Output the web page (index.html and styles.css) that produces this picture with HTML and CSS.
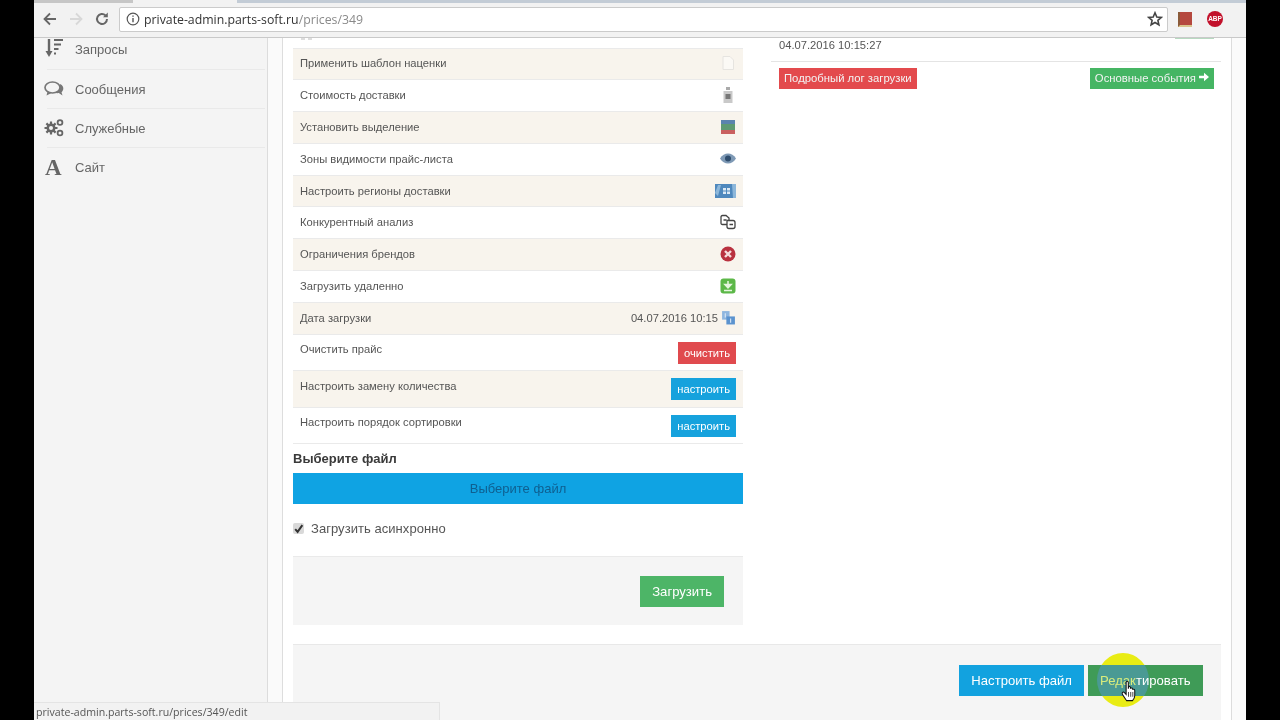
FILE: index.html
```html
<!DOCTYPE html>
<html lang="ru">
<head>
<meta charset="utf-8">
<title>Прайс-лист</title>
<link rel="stylesheet" href="styles.css">
</head>
<body>
<div class="window">
  <div class="tabstrip"><span class="tab tab-a"></span><span class="tab tab-active"></span><span class="tab tab-b"></span></div>
  <header class="toolbar">
    <svg class="nav" viewBox="0 0 16 16"><path d="M14 8H3M8 2.500 2.500 8 8 13.500" fill="none" stroke="#666" stroke-width="1.800"/></svg>
    <svg class="nav" viewBox="0 0 16 16"><path d="M2 8h11M8 2.500 13.500 8 8 13.500" fill="none" stroke="#d8d8d8" stroke-width="1.800"/></svg>
    <svg class="nav" viewBox="0 0 16 16"><path d="M13 8a5 5 0 1 1-1.500-3.600" fill="none" stroke="#666" stroke-width="2"/><path d="M13.800 1.500v4.800H9z" fill="#666"/></svg>
    <div class="omnibox">
      <svg class="info" viewBox="0 0 14 14"><circle cx="7" cy="7" r="5.800" fill="none" stroke="#555" stroke-width="1.200"/><path d="M7 6v4.200M7 3.500v1.300" stroke="#555" stroke-width="1.400"/></svg>
      <span class="url">private-admin.parts-soft.ru<span class="url-path">/prices/349</span></span>
      <svg class="star" viewBox="0 0 16 16"><path d="M8 1.800 9.800 6l4.500.4-3.400 3 1 4.400L8 11.500l-3.900 2.300 1-4.400-3.400-3L6.200 6z" fill="none" stroke="#444" stroke-width="1.600"/></svg>
    </div>
    <span class="ext-book"></span>
    <span class="ext-abp">ABP</span>
  </header>

  <div class="page">
    <aside class="sidebar">
      <div class="side-item side-first">
        <svg class="side-icon" viewBox="0 0 20 20"><path d="M5 0v14" stroke="#666" stroke-width="2.400"/><path d="M1.500 12 5 18l3.500-6z" fill="#666"/><path d="M10 1h9M10 5.500h7M10 10h4.500M10 14.500h2" stroke="#666" stroke-width="2.200"/></svg>
        <span>Запросы</span>
      </div>
      <div class="side-item">
        <svg class="side-icon" viewBox="0 0 20 20"><ellipse cx="8.500" cy="8.500" rx="7.500" ry="5.500" fill="none" stroke="#777" stroke-width="1.700"/><path d="M3.500 12.500 2.500 16.500 7.500 14" fill="#777"/><path d="M16 5c2.800 1.200 3.800 3.500 3.200 5.500-.3 1.200-1 2.200-1.700 2.800l1 3.200-3.700-2.400c-1.500.3-3.300 0-4.300-.8 3.500 0 6-2.500 5.500-8.300z" fill="#777"/></svg>
        <span>Сообщения</span>
      </div>
      <div class="side-item">
        <svg class="side-icon" viewBox="0 0 20 20"><path d="M7 3.500v13M.5 10h13M2.400 5.400l9.200 9.200M11.600 5.400l-9.200 9.200" stroke="#666" stroke-width="2.200"/><circle cx="7" cy="10" r="4.500" fill="#666"/><circle cx="7" cy="10" r="2" fill="#f4f4f4"/><circle cx="16" cy="4.500" r="2.400" fill="none" stroke="#666" stroke-width="1.800"/><circle cx="16" cy="15" r="2.400" fill="none" stroke="#666" stroke-width="1.800"/></svg>
        <span>Служебные</span>
      </div>
      <div class="side-item side-last">
        <span class="side-letter">A</span>
        <span>Сайт</span>
      </div>
    </aside>
    <div class="gutter"></div>

    <main class="panel">
      <div class="columns">
        <section class="col-left">
          <div class="row row-clip"><svg class="ic ic-clip" viewBox="0 0 14 2"><path d="M1 0h4v2H1zM8 0h4v2H8z" fill="#ddd"/></svg></div>
          <div class="row row-alt"><span>Применить шаблон наценки</span>
            <svg class="ic" viewBox="0 0 14 14"><path d="M2 .5h7l3.500 3.500v9.500H2z" fill="#fbf9f5" stroke="#e6e4e0"/></svg></div>
          <div class="row"><span>Стоимость доставки</span>
            <svg class="ic ic-bottle" viewBox="0 0 12 16"><path d="M4 0h4v3H4z" fill="#aaa"/><path d="M1.500 4h9v12h-9z" fill="#c9c9c9"/><path d="M3.500 7h5v5h-5z" fill="#777"/></svg></div>
          <div class="row row-alt"><span>Установить выделение</span>
            <svg class="ic" viewBox="0 0 14 14"><path d="M0 0h14v4H0z" fill="#5b84ae"/><path d="M0 4h14v6H0z" fill="#5f9a73"/><path d="M0 10h14v4H0z" fill="#c96060"/></svg></div>
          <div class="row"><span>Зоны видимости прайс-листа</span>
            <svg class="ic ic-eye" viewBox="0 0 16 11"><path d="M0 5.500c2-3.500 5-5 8-5s6 1.500 8 5c-2 3.500-5 5-8 5s-6-1.500-8-5z" fill="#7e99b5"/><circle cx="8" cy="5.500" r="3" fill="#2f4d6d"/></svg></div>
          <div class="row row-alt"><span>Настроить регионы доставки</span>
            <svg class="ic ic-wide" viewBox="0 0 21 14"><path d="M0 0h21v14H0z" fill="#4f88bd"/><path d="M0 9 3 1h3L3 12zM17 0h4v14h-3z" fill="#8db7da"/><path d="M8 4h7v6H8z" fill="#dce9f4"/><path d="M11.500 4v6M8 7h7" stroke="#4f88bd"/></svg></div>
          <div class="row"><span>Конкурентный анализ</span>
            <svg class="ic ic-big" viewBox="0 0 16 16"><path d="M1 3q0-1.500 1.500-1.500H6L9 4v6.500H2.500Q1 10.500 1 9z" fill="#fff" stroke="#444" stroke-width="1.300"/><path d="M7 6.500h6q2 0 2 2v4q0 2-2 2H9q-2 0-2-2z" fill="#fff" stroke="#444" stroke-width="1.300"/><path d="M3.500 6h3M9.500 10.500h3.500" stroke="#444" stroke-width="1.300"/></svg></div>
          <div class="row row-alt"><span>Ограничения брендов</span>
            <svg class="ic ic-big" viewBox="0 0 16 16"><circle cx="8" cy="8" r="7.500" fill="#b9313f"/><path d="M5 5l6 6M11 5l-6 6" stroke="#f5dcdc" stroke-width="2.400"/></svg></div>
          <div class="row"><span>Загрузить удаленно</span>
            <svg class="ic ic-big" viewBox="0 0 16 16"><rect x=".5" y=".5" width="15" height="15" rx="3" fill="#5cb848"/><path d="M8 3v4M4.800 6.500h6.400L8 10zM4 12.500h8" stroke="#e6f6df" fill="#e6f6df" stroke-width="1.500"/></svg></div>
          <div class="row row-alt"><span>Дата загрузки</span>
            <span class="row-date">04.07.2016 10:15<svg class="ic-date" viewBox="0 0 14 14"><path d="M1 1h7v8H1z" fill="#8fb6df"/><path d="M5 6h8v7.500H5z" fill="#5b93cf"/><path d="M4 3v4M9 8v4" stroke="#dce9f6"/></svg></span></div>
          <div class="row row-btn"><span>Очистить прайс</span><a class="mini mini-red">очистить</a></div>
          <div class="row row-btn row-alt"><span>Настроить замену количества</span><a class="mini mini-blue">настроить</a></div>
          <div class="row row-btn"><span>Настроить порядок сортировки</span><a class="mini mini-blue">настроить</a></div>

          <h4 class="file-title">Выберите файл</h4>
          <div class="file-bar">Выберите файл</div>
          <label class="async"><span class="check"><svg viewBox="0 0 10 10"><path d="M2 5.500 4.200 8 8.500 2" fill="none" stroke="#333" stroke-width="1.800"/></svg></span>Загрузить асинхронно</label>
          <div class="form-foot"><a class="btn btn-green">Загрузить</a></div>
        </section>

        <section class="col-right">
          <div class="tiny-green"></div>
          <div class="log-date">04.07.2016 10:15:27</div>
          <div class="log-actions">
            <a class="log-btn log-red">Подробный лог загрузки</a>
            <a class="log-btn log-green">Основные события <svg class="log-arrow" viewBox="0 0 10 10"><path d="M0 3.700h5V.8L10 5 5 9.200V6.300H0z" fill="#fff"/></svg></a>
          </div>
        </section>
      </div>

      <footer class="panel-foot">
        <a class="btn btn-blue">Настроить файл</a>
        <div class="edit-wrap">
          <span class="spot"></span>
          <a class="btn btn-edit"><span class="spot-in"></span><span class="edit-label"><span class="edit-hl">Редак</span>тировать</span></a>
          <svg class="hand" viewBox="0 0 16 24"><path d="M5 2.500c0-1.600 2.300-1.600 2.300 0V9l.4-2c1.800-.5 2 .3 2 1.500 1.700-.7 2.200.2 2.200 1.200 1.500-.5 2.100.4 2.100 1.500v5.300c0 2-1.300 4-2.300 5H5.500c-1-1.500-4-5.500-4.500-7-.5-1.800 1.300-2.500 2.300-1.300L5 15z" fill="#fff" stroke="#111" stroke-width="1.100"/><path d="M7.500 12.500v5M9.800 12.500v5M12 12.500v5" stroke="#111" stroke-width=".8"/></svg>
        </div>
      </footer>
    </main>
    <div class="gutter gutter-right"></div>
  </div>
  <div class="status">private-admin.parts-soft.ru/prices/349/edit</div>
</div>
</body>
</html>
```
FILE: styles.css
```css
* { box-sizing: border-box; }
html, body { margin: 0; height: 720px; overflow: hidden; background: #000; }
body { display: flex; justify-content: flex-start; padding-left: 34px; font-family: "Liberation Sans", Arial, sans-serif; color: #555; }
a { display: inline-block; }

.window { position: relative; width: 1212px; height: 720px; display: flex; flex-direction: column; background: #fff; overflow: hidden; filter: blur(.5px); }

.tabstrip { height: 3px; display: flex; background: #c9d6e4; flex: none; }
.tab { display: block; height: 3px; }
.tab-a { width: 99px; background: #c6c6c6; }
.tab-active { width: 104px; background: #f2f2f2; }
.tab-b { width: 1009px; background: #c3ccd6; }

.toolbar { height: 35px; flex: none; display: flex; align-items: center; padding: 0 0 2px 8px; background: #f2f2f2; border-bottom: 1px solid #c9c9c9; }
.nav { width: 16px; height: 16px; margin-right: 10px; flex: none; }
.omnibox { margin-left: -1px; width: 1049px; height: 25px; display: flex; align-items: center; padding: 0 4px 0 6px; background: #fff; border: 1px solid #cbcbcb; border-radius: 2px; }
.info { width: 14px; height: 14px; margin-right: 4px; flex: none; }
.url { flex: 1; font: 12.300px "Open Sans", sans-serif; color: #333; }
.url-path { color: #8a8a8a; }
.star { width: 16px; height: 16px; flex: none; }
.ext-book { display: block; width: 14px; height: 15px; margin-left: 10px; background: #b5483f; border-left: 2px solid #8a5a3a; border-bottom: 2px solid #d9c48c; }
.ext-abp { display: block; width: 16px; height: 16px; margin-left: 15px; border-radius: 50%; background: #c2112b; color: #fff; font: bold 6.500px/16px "Liberation Sans", sans-serif; text-align: center; }

.page { flex: 1; min-height: 0; display: flex; }
.sidebar { width: 234px; flex: none; background: #f4f4f4; border-right: 1px solid #dcdcdc; }
.side-item { position: relative; height: 39.300px; display: flex; align-items: center; padding-left: 41px; font-size: 13px; color: #666; }
.side-item::after { content: ""; position: absolute; left: 13px; right: 2px; bottom: 0; border-bottom: 1px solid #e9e9e9; }
.side-first { height: 31.500px; align-items: flex-start; padding-top: 4px; }
.side-last::after { display: none; }
.side-icon { position: absolute; left: 10px; width: 20px; height: 20px; }
.side-first .side-icon { top: 1px; }
.side-letter { position: absolute; left: 11px; font: bold 23px "Liberation Serif", serif; color: #666; }

.gutter { width: 14px; flex: none; background: #fafafa; }
.gutter-right { background: #fbfbfb; }

.panel { width: 950px; flex: none; display: flex; flex-direction: column; padding: 0 10px; background: #fff; border-left: 1px solid #ddd; border-right: 1px solid #ddd; }
.columns { height: 606px; flex: none; display: flex; }
.col-left { width: 450px; flex: none; }

.row { height: 31.800px; display: flex; align-items: center; justify-content: space-between; padding: 0 7px 1px; font-size: 11.200px; color: #555; border-bottom: 1px solid #eaeaea; }
.row-alt { background: #f8f4ed; }
.row-clip { height: 10.500px; align-items: flex-start; padding-bottom: 0; }
.ic { width: 14px; height: 14px; margin-right: 1px; }
.ic-bottle { width: 12px; height: 16px; margin-right: 2px; }
.ic-eye { width: 16px; height: 11px; margin-right: 0; }
.ic-wide { width: 21px; margin-right: 0; }
.ic-big { width: 16px; height: 16px; margin-right: 0; }
.ic-clip { height: 2px; }
.row-date { display: flex; align-items: center; gap: 3px; }
.ic-date { width: 15px; height: 15px; }
.row-btn { height: 36.500px; align-items: flex-start; padding-top: 7px; padding-bottom: 0; }
.row-btn span { margin-top: 1.500px; }
.mini { height: 22px; padding: 0 6px; font-size: 11.200px; line-height: 22px; color: #fff; }
.mini-red { background: #e04a4e; }
.mini-blue { background: #16a2dd; }

.file-title { margin: 7px 0 7px; font-size: 13px; line-height: 15px; color: #3a3a3a; }
.file-bar { height: 31px; background: #0fa3e3; color: #0f5f90; font-size: 13px; line-height: 31px; text-align: center; }
.async { display: flex; align-items: center; height: 16px; margin-top: 16px; font-size: 13px; letter-spacing: .05px; color: #555; }
.check { width: 11px; height: 11px; margin-right: 7px; background: #d9d9d9; border-radius: 2px; display: block; }
.check svg { display: block; width: 11px; height: 11px; }
.form-foot { margin-top: 20px; height: 69px; padding: 19px 19px 0 0; display: flex; justify-content: flex-end; align-items: flex-start; background: #f5f5f5; border-top: 1px solid #eaeaea; }

.btn { height: 31px; padding: 0 12px; font-size: 13.100px; line-height: 31px; color: #fff; }
.btn-green { background: #4db567; }
.btn-blue { background: #12a2df; }

.col-right { width: 450px; margin-left: 28px; flex: none; }
.tiny-green { width: 39px; height: 1px; margin-left: 404px; background: #b7d9c0; }
.log-date { height: 22.500px; padding: 0 0 0 8px; font-size: 11.200px; line-height: 13px; color: #555; border-bottom: 1px solid #e4e4e4; }
.log-actions { display: flex; justify-content: space-between; padding: 6px 7px 0 8px; }
.log-btn { height: 21px; padding: 0 5px; font-size: 11.300px; line-height: 21px; color: #f3f3f3; white-space: nowrap; }
.log-red { background: #e34a4d; }
.log-green { background: #45b563; }
.log-arrow { width: 10px; height: 10px; }

.panel-foot { flex: 1; display: flex; justify-content: flex-end; align-items: flex-start; gap: 4px; padding: 20px 18px 0 0; background: #f5f5f5; border-top: 1px solid #e8e8e8; }
.edit-wrap { position: relative; }
.spot { position: absolute; left: 9px; top: -12px; width: 52px; height: 54px; border-radius: 50%; background: #e9ec14; }
.btn-edit { position: relative; overflow: hidden; display: block; width: 115px; background: #3f9b57; }
.spot-in { position: absolute; left: 9px; top: -12px; width: 52px; height: 54px; border-radius: 50%; background: #4a9a94; }
.edit-label { position: relative; }
.edit-hl { color: #d8ec7c; }
.hand { position: absolute; left: 33px; top: 15px; width: 16px; height: 23px; }

.status { position: absolute; left: 0; bottom: 0; width: 406px; height: 18px; padding-left: 2px; background: #f2f2f2; border-top: 1px solid #e4e4e4; border-right: 1px solid #e4e4e4; font: 10.600px/18px "Open Sans", sans-serif; color: #555; }
```
